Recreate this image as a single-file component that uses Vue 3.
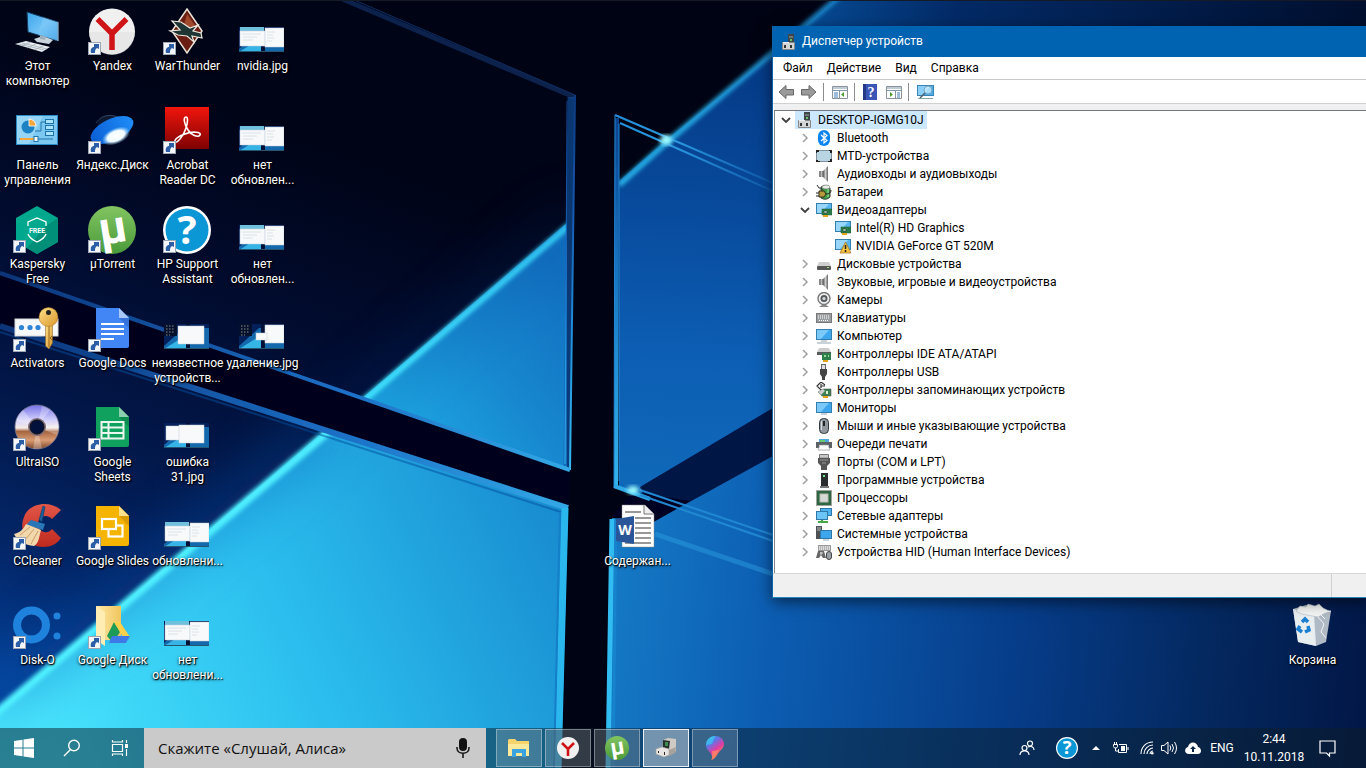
<script setup>
const shots = {
  split: { dots: false, panes: [[1, 4, 25, 15], [26, 1, 19, 19]], lines: true },
  single: { dots: true, panes: [[14, 2, 26, 18]], lines: false },
  dialog: { dots: true, panes: [[26, 1, 19, 18], [17, 9, 11, 7]], lines: false },
  error: { dots: false, panes: [[2, 3, 14, 14], [15, 2, 25, 18]], lines: false }
}

const marks = {
  kasper: { t: 'FREE', x: 24, y: 27, cls: 'free' },
  utor: { t: 'µ', x: 25, y: 37, cls: 'mu' },
  hp: { t: '?', x: 24, y: 38, cls: 'q' },
  word: { t: 'W', x: 12, y: 32, cls: 'w' }
}

const items = [
  { c: 1, r: 1, icon: 'pc', text: 'Этот\nкомпьютер' },
  { c: 1, r: 2, icon: 'panel', text: 'Панель\nуправления' },
  { c: 1, r: 3, icon: 'kasper', link: true, text: 'Kaspersky\nFree' },
  { c: 1, r: 4, icon: 'activ', link: true, text: 'Activators' },
  { c: 1, r: 5, icon: 'iso', link: true, text: 'UltraISO' },
  { c: 1, r: 6, icon: 'cclean', link: true, text: 'CCleaner' },
  { c: 1, r: 7, icon: 'disko', link: true, text: 'Disk-O' },
  { c: 2, r: 1, icon: 'yandex', link: true, text: 'Yandex' },
  { c: 2, r: 2, icon: 'ydisk', link: true, text: 'Яндекс.Диск' },
  { c: 2, r: 3, icon: 'utor', link: true, text: 'µTorrent' },
  { c: 2, r: 4, icon: 'docs', link: true, text: 'Google Docs' },
  { c: 2, r: 5, icon: 'sheets', link: true, text: 'Google\nSheets' },
  { c: 2, r: 6, icon: 'slides', link: true, text: 'Google Slides' },
  { c: 2, r: 7, icon: 'gdrive', link: true, text: 'Google Диск' },
  { c: 3, r: 1, icon: 'war', link: true, text: 'WarThunder' },
  { c: 3, r: 2, icon: 'acro', link: true, text: 'Acrobat\nReader DC' },
  { c: 3, r: 3, icon: 'hp', link: true, text: 'HP Support\nAssistant' },
  { c: 3, r: 4, shot: 'single', text: 'неизвестное\nустройств...' },
  { c: 3, r: 5, shot: 'error', text: 'ошибка\n31.jpg' },
  { c: 3, r: 6, shot: 'split', text: 'обновлени...' },
  { c: 3, r: 7, shot: 'split', text: 'нет\nобновлени...' },
  { c: 4, r: 1, shot: 'split', text: 'nvidia.jpg' },
  { c: 4, r: 2, shot: 'split', text: 'нет\nобновлен...' },
  { c: 4, r: 3, shot: 'split', text: 'нет\nобновлен...' },
  { c: 4, r: 4, shot: 'dialog', text: 'удаление.jpg' },
  { c: 9, r: 6, icon: 'word', text: 'Содержан...' },
  { c: 18, r: 7, icon: 'bin', text: 'Корзина' }
]

const tree = [
  { l: 0, open: true, icon: 'root', text: 'DESKTOP-IGMG10J', sel: true },
  { l: 1, icon: 'bt', text: 'Bluetooth' },
  { l: 1, icon: 'mtd', text: 'MTD-устройства' },
  { l: 1, icon: 'snd', text: 'Аудиовходы и аудиовыходы' },
  { l: 1, icon: 'bat', text: 'Батареи' },
  { l: 1, open: true, icon: 'gpu', text: 'Видеоадаптеры' },
  { l: 2, leaf: true, icon: 'gpu', text: 'Intel(R) HD Graphics' },
  { l: 2, leaf: true, icon: 'gpuwarn', text: 'NVIDIA GeForce GT 520M' },
  { l: 1, icon: 'disk', text: 'Дисковые устройства' },
  { l: 1, icon: 'snd', text: 'Звуковые, игровые и видеоустройства' },
  { l: 1, icon: 'cam', text: 'Камеры' },
  { l: 1, icon: 'kbd', text: 'Клавиатуры' },
  { l: 1, icon: 'comp', text: 'Компьютер' },
  { l: 1, icon: 'ide', text: 'Контроллеры IDE ATA/ATAPI' },
  { l: 1, icon: 'usb', text: 'Контроллеры USB' },
  { l: 1, icon: 'stor', text: 'Контроллеры запоминающих устройств' },
  { l: 1, icon: 'mon', text: 'Мониторы' },
  { l: 1, icon: 'mouse', text: 'Мыши и иные указывающие устройства' },
  { l: 1, icon: 'print', text: 'Очереди печати' },
  { l: 1, icon: 'port', text: 'Порты (COM и LPT)' },
  { l: 1, icon: 'soft', text: 'Программные устройства' },
  { l: 1, icon: 'cpu', text: 'Процессоры' },
  { l: 1, icon: 'net', text: 'Сетевые адаптеры' },
  { l: 1, icon: 'sys', text: 'Системные устройства' },
  { l: 1, icon: 'hid', text: 'Устройства HID (Human Interface Devices)' }
]

const menu = ['Файл', 'Действие', 'Вид', 'Справка']
const apps = [
  { icon: 'explorer', name: 'Проводник' },
  { icon: 'tyandex', name: 'Yandex' },
  { icon: 'utor', name: 'µTorrent', big: true },
  { icon: 'tdev', name: 'Диспетчер устройств', on: true },
  { icon: 'paint', name: 'Paint 3D' }
]
</script>

<template>
  <main class="screen">
    <svg class="wall" viewBox="0 0 1366 768" preserveAspectRatio="none" aria-hidden="true">
      <defs>
        <linearGradient id="wBase" gradientUnits="userSpaceOnUse" x1="250" y1="120" x2="40" y2="700">
          <stop offset="0" stop-color="#000417" /><stop offset="0.3" stop-color="#010c30" /><stop offset="0.55" stop-color="#021749" /><stop offset="0.8" stop-color="#03276a" /><stop offset="1" stop-color="#05439a" />
        </linearGradient>
        <linearGradient id="wTri" gradientUnits="userSpaceOnUse" x1="400" y1="420" x2="575" y2="290">
          <stop offset="0" stop-color="#1da4e0" /><stop offset="0.5" stop-color="#1787cf" /><stop offset="1" stop-color="#1270c0" />
        </linearGradient>
        <linearGradient id="wLow" gradientUnits="userSpaceOnUse" x1="60" y1="768" x2="600" y2="520">
          <stop offset="0" stop-color="#48e3fc" /><stop offset="0.45" stop-color="#2bbeee" /><stop offset="1" stop-color="#1686cc" />
        </linearGradient>
        <linearGradient id="wR" gradientUnits="userSpaceOnUse" x1="700" y1="60" x2="680" y2="480">
          <stop offset="0" stop-color="#053a86" /><stop offset="0.35" stop-color="#084a9c" /><stop offset="0.7" stop-color="#0c5eb4" /><stop offset="1" stop-color="#1068b8" />
        </linearGradient>
        <linearGradient id="wRlow" gradientUnits="userSpaceOnUse" x1="610" y1="560" x2="1366" y2="640">
          <stop offset="0" stop-color="#157ac6" /><stop offset="0.22" stop-color="#0c5db2" /><stop offset="0.55" stop-color="#063c88" /><stop offset="0.8" stop-color="#04285f" /><stop offset="1" stop-color="#021848" />
        </linearGradient>
        <linearGradient id="wTop" gradientUnits="userSpaceOnUse" x1="780" y1="0" x2="1366" y2="0">
          <stop offset="0" stop-color="#07509c" /><stop offset="0.3" stop-color="#032a66" /><stop offset="1" stop-color="#010f2e" />
        </linearGradient>
        <linearGradient id="wRay" gradientUnits="userSpaceOnUse" x1="365" y1="395" x2="835" y2="0">
          <stop offset="0" stop-color="#43e8ff" /><stop offset="0.6" stop-color="#2bbdf0" /><stop offset="1" stop-color="#1a86cc" />
        </linearGradient>
        <linearGradient id="wEdge" gradientUnits="userSpaceOnUse" x1="0" y1="95" x2="0" y2="470">
          <stop offset="0" stop-color="#0d3a80" /><stop offset="0.3" stop-color="#1557ae" /><stop offset="0.6" stop-color="#1f8bd8" /><stop offset="1" stop-color="#35b9f0" />
        </linearGradient>
        <linearGradient id="wInner" gradientUnits="userSpaceOnUse" x1="0" y1="118" x2="0" y2="482">
          <stop offset="0" stop-color="#0b428c" /><stop offset="0.4" stop-color="#1672c0" /><stop offset="1" stop-color="#32b4ec" />
        </linearGradient>
        <linearGradient id="wDiag" gradientUnits="userSpaceOnUse" x1="0" y1="0" x2="570" y2="0">
          <stop offset="0" stop-color="#0a3478" /><stop offset="0.6" stop-color="#1c6fc6" /><stop offset="1" stop-color="#33a9e6" />
        </linearGradient>
        <linearGradient id="wFade" gradientUnits="userSpaceOnUse" x1="614" y1="0" x2="773" y2="0">
          <stop offset="0" stop-color="#2390dc" /><stop offset="0.4" stop-color="#2a96de" /><stop offset="1" stop-color="#0e55a6" />
        </linearGradient>
        <filter id="b2" x="-20%" y="-20%" width="140%" height="140%"><feGaussianBlur stdDeviation="2" /></filter>
        <filter id="b1" x="-20%" y="-20%" width="140%" height="140%"><feGaussianBlur stdDeviation="0.7" /></filter>
        <filter id="b20" x="-50%" y="-50%" width="200%" height="200%"><feGaussianBlur stdDeviation="26" /></filter>
        <clipPath id="cUp"><path d="M0 0H340L567 100 567 470 0 273z" /></clipPath>
        <clipPath id="cLow"><path d="M0 325L568 507 561 768H0z" /></clipPath>
      </defs>
      <rect width="1366" height="768" fill="url(#wBase)" />
      <path d="M340 0L575 96 570 470 568 507 561 768H1366V0z" fill="#000313" />
      <g clip-path="url(#cUp)">
        <path d="M360 400L575 216V480z" fill="url(#wTri)" />
        <path d="M350 408L580 212" stroke="#083c92" stroke-width="30" filter="url(#b20)" opacity="0.25" />
        <path d="M350 412L580 216" stroke="url(#wRay)" stroke-width="6" filter="url(#b2)" />
      </g>
      <path d="M0 273L570 470 568 507 0 324z" fill="#00041a" filter="url(#b1)" />
      <g clip-path="url(#cLow)">
        <path d="M0 709L330 426 580 500V768H0z" fill="url(#wLow)" />
        <path d="M-10 700L330 420" stroke="#0a54b4" stroke-width="30" filter="url(#b20)" opacity="0.5" />
        <path d="M-10 718L330 430" stroke="#4ff0ff" stroke-width="8" filter="url(#b2)" />
      </g>
      <path d="M835 0H1366V300H773V53z" fill="url(#wTop)" />
      <path d="M773 53L665 141 619 181V487L773 542z" fill="url(#wR)" />
      <path d="M773 408L640 487 655 523 773 540z" fill="#011344" filter="url(#b1)" />
      <path d="M773 456L655 521 612 518 607 768H1366V456z" fill="url(#wRlow)" />
      <path d="M612 516L633 492 690 501 650 524z" fill="#000620" filter="url(#b1)" />
      <path d="M619 185L665 144 842 -6" fill="none" stroke="url(#wRay)" stroke-width="5" filter="url(#b2)" />
      <g fill="none" filter="url(#b1)">
        <path d="M340 -2L574 97" stroke="#08204c" stroke-width="5" />
        <path d="M345 -4L575 95" stroke="#0e2f63" stroke-width="1" />
        <path d="M571 97L567 467" stroke="#0f59ad" stroke-opacity="0.6" stroke-width="7" />
        <path d="M575 95L570 470" stroke="url(#wEdge)" stroke-width="2" />
        <path d="M567 101L565 464" stroke="url(#wEdge)" stroke-width="1" />
        <path d="M0 273L570 470" stroke="url(#wDiag)" stroke-width="4" />
        <path d="M0 332L567 514" stroke="#0b4d9d" stroke-width="2" opacity="0.5" />
        <path d="M0 326L568 508" stroke="url(#wDiag)" stroke-width="6" />
        <path d="M565 508L558 768" stroke="#2bb7ee" stroke-width="7" />
        <path d="M560 512L554 768" stroke="#137fc8" stroke-width="2" />
        <path d="M773 183L615 115" stroke="url(#wFade)" stroke-width="2" />
        <path d="M773 191L620 123" stroke="url(#wFade)" stroke-width="2" />
        <path d="M617 118L616 486" stroke="url(#wInner)" stroke-width="4" />
        <path d="M615 115L614 487M619 124L619 481" stroke="#2386d4" stroke-width="1" />
        <path d="M614 486L650 499" stroke="#2ea9e6" stroke-width="4" />
        <path d="M640 495L773 541M640 490L773 535" stroke="#2088d2" stroke-width="2" />
        <path d="M612 519L608 768" stroke="#30bdf2" stroke-width="5" />
        <path d="M616 520L613 768" stroke="#1683cc" stroke-width="3" />
        <path d="M655 534L773 574" stroke="#2c9be0" stroke-width="5" stroke-opacity="0.5" />
      </g>
      <ellipse cx="666" cy="140" rx="6" ry="5" fill="#9dfcff" filter="url(#b2)" />
      <ellipse cx="633" cy="490" rx="6" ry="4" fill="#9dfcff" filter="url(#b2)" />
      <rect width="1366" height="1" fill="#141a26" />
    </svg>

    <svg class="defs" aria-hidden="true">
      <defs>
        <linearGradient id="gScr" x1="0" y1="0" x2="1" y2="1"><stop offset="0" stop-color="#3ba4ea" /><stop offset="0.5" stop-color="#6fc2f6" /><stop offset="1" stop-color="#2f97e2" /></linearGradient>
        <linearGradient id="gRed" x1="0" y1="0" x2="0" y2="1"><stop offset="0" stop-color="#f2150d" /><stop offset="1" stop-color="#7d0202" /></linearGradient>
        <linearGradient id="gKey" x1="0" y1="0" x2="1" y2="1"><stop offset="0" stop-color="#ffe18b" /><stop offset="1" stop-color="#d9952a" /></linearGradient>
        <linearGradient id="gIso" x1="0" y1="0" x2="0" y2="1"><stop offset="0" stop-color="#7672e8" /><stop offset="0.35" stop-color="#d4d2fb" /><stop offset="0.52" stop-color="#f5ece6" /><stop offset="0.6" stop-color="#a4653f" /><stop offset="0.8" stop-color="#d99b74" /><stop offset="1" stop-color="#7b4426" /></linearGradient>
        <linearGradient id="gUt" x1="0" y1="0" x2="0" y2="1"><stop offset="0" stop-color="#82c461" /><stop offset="1" stop-color="#4a9a3a" /></linearGradient>
        <linearGradient id="gYd" x1="0" y1="0" x2="1" y2="0"><stop offset="0" stop-color="#0b5fd6" /><stop offset="1" stop-color="#1e8cf6" /></linearGradient>
        <radialGradient id="gGlow"><stop offset="0" stop-color="#fff" /><stop offset="0.6" stop-color="#f0fbff" /><stop offset="1" stop-color="#8fd2ff" stop-opacity="0" /></radialGradient>
        <linearGradient id="gPaint" x1="0" y1="0" x2="0.6" y2="1"><stop offset="0" stop-color="#2bc3f2" /><stop offset="0.35" stop-color="#5f76e8" /><stop offset="0.65" stop-color="#e33ba2" /><stop offset="1" stop-color="#ff9a2e" /></linearGradient>
        <linearGradient id="gSilver" x1="0" y1="0" x2="1" y2="0"><stop offset="0" stop-color="#555" /><stop offset="0.5" stop-color="#ccc" /><stop offset="1" stop-color="#666" /></linearGradient>
        <linearGradient id="gFold" x1="0" y1="0" x2="1" y2="0"><stop offset="0" stop-color="#ffe9a8" /><stop offset="1" stop-color="#f0c55c" /></linearGradient>
        <linearGradient id="gC" x1="0" y1="0" x2="0" y2="1"><stop offset="0" stop-color="#e25648" /><stop offset="1" stop-color="#bf2a1f" /></linearGradient>
      </defs>
      <symbol id="pc" viewBox="0 0 48 48">
        <path d="M14 4L45 14V33L15 24z" fill="url(#gScr)" stroke="#123c60" /><path d="M30 9L45 14V33L25 27z" fill="#8fd2fa" opacity="0.35" /><path d="M45 14V33" stroke="#a9c4d6" />
        <path d="M21 31L30 28 40 32 36 36 24 34z" fill="#c9d4dc" /><path d="M27 27L33 29 32 32 27 31z" fill="#9fb0bd" />
        <path d="M2 36L13 33 37 39 29 44z" fill="#e8edf0" /><path d="M5 36L31 42M9 35L34 41M8 38L18 34M14 40L23 36M21 42L30 38" stroke="#9aa8b4" stroke-width="0.7" />
      </symbol>
      <symbol id="panel" viewBox="0 0 48 48">
        <rect x="3.500" y="8.500" width="41" height="29" fill="#7cc8f0" stroke="#2a8cc7" /><path d="M4 9H30L16 37H4z" fill="#a9def8" opacity="0.6" />
        <circle cx="15" cy="20" r="6.500" fill="#1b82c4" /><path d="M16 19V12A7 7 0 0 1 23 19z" fill="#f6a73c" stroke="#fff" stroke-width="0.8" /><path d="M22 24H28V15H32M6 32H40" fill="none" stroke="#2277ac" /><rect x="32.500" y="12.500" width="8" height="4" fill="#a9e2fb" stroke="#1d73a7" /><rect x="32.500" y="18.500" width="8" height="4" fill="#a9e2fb" stroke="#1d73a7" /><rect x="32.500" y="24.500" width="8" height="4" fill="#a9e2fb" stroke="#1d73a7" />
        <path d="M7 32H21" stroke="#f7a63a" stroke-width="2" /><rect x="21" y="29.500" width="4" height="5" fill="#fff" stroke="#1d73a7" />
      </symbol>
      <symbol id="kasper" viewBox="0 0 48 48">
        <path d="M24 0L45 12V36L24 48 3 36V12z" fill="#00a88e" /><path d="M45 12V36L24 48 14 42 33 20z" fill="#008f78" />
        <path d="M15 20V16L24 12 33 16V20M15 28C16 32 20 34 24 36 28 34 32 32 33 28" fill="none" stroke="#fff" stroke-width="1.300" />
      </symbol>
      <symbol id="activ" viewBox="0 0 48 48">
        <rect x="2" y="14" width="43" height="17" fill="#f7f8fa" stroke="#d6dade" /><g fill="#2f86d6"><circle cx="8.500" cy="22.500" r="2.600" /><circle cx="17" cy="22.500" r="2.600" /><circle cx="25" cy="22.500" r="2.600" /></g>
        <path d="M32.500 19H39.500V38L36 44 32.500 41z" fill="url(#gKey)" stroke="#7d5a1d" stroke-width="0.5" /><path d="M36 20V42M39 31L37 33 39 35" stroke="#96681e" fill="none" /><circle cx="35.500" cy="12" r="9.500" fill="url(#gKey)" stroke="#a5741f" stroke-width="0.5" /><circle cx="35.500" cy="7.500" r="2.500" fill="#222" />
      </symbol>
      <symbol id="iso" viewBox="0 0 48 48">
        <circle cx="24" cy="23" r="22" fill="url(#gIso)" stroke="#7a7890" stroke-width="0.8" /><path d="M24 23L10 6A22 22 0 0 0 3 17zM24 23L46 20A22 22 0 0 1 44 31zM24 23L20 45A22 22 0 0 0 29 44zM24 23L29 2A22 22 0 0 1 37 6z" fill="#fff" opacity="0.28" /><circle cx="24" cy="23" r="9" fill="#7b6a78" /><circle cx="24" cy="23" r="7" fill="#02103c" stroke="#111" />
      </symbol>
      <symbol id="cclean" viewBox="0 0 48 48">
        <path d="M48 7C35-4 15 1 11 14 5 28 15 44 30 44 38 44 44 41 48 35L39 26C34 32 25 29 25 21 25 14 33 10 39 16z" fill="url(#gC)" />
        <path d="M26 17L30 3 32 4 29 19z" fill="#1c5e98" stroke="#0c3b68" stroke-width="0.6" /><path d="M18 17L32 21 30 27 13 22z" fill="#2977b7" /><path d="M13 21L28 27C26 34 26 40 21 43 12 42 5 39 1 31 6 30 10 27 13 21z" fill="#f2d7ac" /><path d="M7 32L17 24M12 37L21 26M18 41L25 28" stroke="#c99f66" fill="none" />
      </symbol>
      <symbol id="disko" viewBox="0 0 48 48">
        <circle cx="18.500" cy="23" r="14.500" fill="none" stroke="#1f82dc" stroke-width="8" /><circle cx="44" cy="14" r="3.500" fill="#1f82dc" /><circle cx="44" cy="34" r="3.500" fill="#1f82dc" />
      </symbol>
      <symbol id="yandex" viewBox="0 0 48 48">
        <circle cx="24" cy="23.500" r="23" fill="#f0f0f1" /><path d="M1 24A23 23 0 0 0 47 24z" fill="#dedee0" opacity="0.5" /><path d="M9.500 11L24 25.500 38.500 11M24 24V42" fill="none" stroke="#cf1317" stroke-width="5.500" />
      </symbol>
      <symbol id="ydisk" viewBox="0 0 48 48">
        <path d="M9 19C13 3 27 7 37 13L31 22z" fill="#121d33" opacity="0.8" /><path d="M8 16C15 6 26 7 36 13" fill="none" stroke="#3a5070" stroke-width="0.8" /><ellipse cx="24" cy="23" rx="23" ry="11" fill="url(#gYd)" transform="rotate(-25 24 23)" /><ellipse cx="28" cy="29" rx="15" ry="8" fill="url(#gGlow)" transform="rotate(-23 28 29)" />
      </symbol>
      <symbol id="utor" viewBox="0 0 48 48"><circle cx="24" cy="24" r="24" fill="url(#gUt)" /></symbol>
      <symbol id="docs" viewBox="0 0 48 48">
        <path d="M8 3H31L41 13V41Q41 43 39 43H10Q8 43 8 41z" fill="#4285f4" /><path d="M31 13H41V23z" fill="#2f66c8" opacity="0.6" /><path d="M31 3L41 13H31z" fill="#a8c7fa" /><path d="M13 19H36M13 24H36M13 29H36M13 34H26" stroke="#fff" stroke-width="2.200" />
      </symbol>
      <symbol id="sheets" viewBox="0 0 48 48">
        <path d="M8 3H31L41 13V41Q41 43 39 43H10Q8 43 8 41z" fill="#10a15e" /><path d="M31 13H41V23z" fill="#0b7b46" opacity="0.6" /><path d="M31 3L41 13H31z" fill="#8bd0ae" /><path d="M13.500 18H35.500V34.500H13.500zM13 23.500H35M13 29H35M20.500 18V34" fill="none" stroke="#e9f7ef" stroke-width="2" />
      </symbol>
      <symbol id="slides" viewBox="0 0 48 48">
        <path d="M8 3H31L41 13V41Q41 43 39 43H10Q8 43 8 41z" fill="#f4b400" /><path d="M31 13H41V23z" fill="#c88b00" opacity="0.6" /><path d="M31 3L41 13H31z" fill="#fde08a" /><rect x="20.500" y="22.500" width="14" height="11" fill="#f4b400" stroke="#fff" stroke-width="2.200" /><rect x="14" y="16" width="14" height="10" fill="#f4b400" stroke="#fff" stroke-width="2.200" />
      </symbol>
      <symbol id="gdrive" viewBox="0 0 48 48">
        <path d="M8 4H33V38H16z" fill="url(#gFold)" /><path d="M8 4L17 10V44L8 38z" fill="#ffedb3" /><path d="M26 20L32 30 25 41 19 34z" fill="#1e9b57" /><path d="M26 20H32L42 35H35z" fill="#ffd04b" /><path d="M24 34H42L38 41H21z" fill="#3f79e8" />
      </symbol>
      <symbol id="war" viewBox="0 0 48 48">
        <path d="M24 1L39 23 24 45 9 23z" fill="#6a1d12" stroke="#e9e3d6" stroke-width="1.500" /><path d="M24 6L33 19 20 20z" fill="#a1492c" /><path d="M9 13L18 14 27 20 35 17 30 23 38 25 39 30 29 28 31 34 24 28 15 27 7 23 17 22z" fill="#1f3533" stroke="#efe9df" stroke-width="1.200" />
      </symbol>
      <symbol id="acro" viewBox="0 0 48 48">
        <rect x="2" width="44" height="42" fill="url(#gRed)" /><path d="M23 10C20 10 21 17 25 23 28 28 35 31 37 28 39 25 29 24 22 27 15 29 11 33 12 35 14 37 21 28 23 21 25 15 25 10 23 10z" fill="none" stroke="#fff" stroke-width="1.600" />
      </symbol>
      <symbol id="hp" viewBox="0 0 48 48"><circle cx="24" cy="24" r="24" fill="#fff" /><circle cx="24" cy="24" r="21.500" fill="#0b96d5" /></symbol>
      <symbol id="word" viewBox="0 0 48 48">
        <path d="M9 2H32L41 11V44H9z" fill="#fff" stroke="#888" stroke-width="0.5" /><path d="M31 2V11H41" fill="#eee" stroke="#777" /><path d="M12 9H28M22 15H38M22 20H38M22 25H38M22 30H38M22 35H38M12 40H38" stroke="#777" stroke-width="1.600" /><path d="M3 16L21 13V41L3 38z" fill="#2a5699" />
      </symbol>
      <symbol id="bin" viewBox="0 0 48 48">
        <path d="M5 7L18 3 43 9 38 40 28 44 10 40z" fill="#c3ccd3" opacity="0.9" /><path d="M5 7L26 12 28 44 10 40z" fill="#e9eef0" /><path d="M8 9L12 4 18 5 20 2 27 4 31 2 35 6 41 9 30 15 14 12z" fill="#f5f6f6" stroke="#b4bcc3" stroke-width="0.6" /><path d="M26 12L43 9M30 15L36 22 33 30 38 36M32 12L37 17" fill="none" stroke="#f4f5f6" />
        <g fill="none" stroke="#1b80d2" stroke-width="3.500"><path d="M14 20L17 17 20 20" /><path d="M20 24L21 28 17 30" /><path d="M14 30L10 27 12 24" /></g>
      </symbol>

      <symbol id="root" viewBox="0 0 16 16"><path d="M7 0H13V10H7z" fill="#3f4548" /><path d="M8 2H12V4H8z" fill="#6c7777" /><rect x="9" y="5" width="2" height="2" fill="#6cc36c" /><path d="M1.500 8.500H13.500V15.500H1.500z" fill="#d3d5d6" stroke="#888" /><path d="M3 11H5V14H3zM9 11H11V14H9z" fill="#333" /><path d="M2 8.500H8" stroke="#eee" /></symbol>
      <symbol id="bt" viewBox="0 0 16 16"><rect x="2" width="12" height="16" rx="6" fill="#0a84f0" /><path d="M5 5L11 10.500 8 13V3L11 5.500 5 11" fill="none" stroke="#fff" stroke-width="1.200" /></symbol>
      <symbol id="mtd" viewBox="0 0 16 16"><rect x="0.500" y="2.500" width="15" height="11" fill="#b9d5e4" stroke="#7d8f99" /><path d="M0 2H3V4H1V5H0zM13 2H16V5H14V3H13zM0 12H2V13H4V14H0zM14 11H16V14H12V13H14z" fill="#222" /></symbol>
      <symbol id="snd" viewBox="0 0 16 16"><path d="M3 5H7V11H3z" fill="#888" /><path d="M7 5L12 0V16L7 11z" fill="url(#gSilver)" /><path d="M5.500 5V11" stroke="#bbb" /></symbol>
      <symbol id="bat" viewBox="0 0 16 16"><path d="M5 3Q9 0 14 4V13Q10 17 5 14z" fill="#3f9d45" stroke="#38433a" /><ellipse cx="10" cy="3" rx="4" ry="2" fill="#e9efe8" stroke="#666" stroke-width="0.6" /><path d="M12 5V13" stroke="#a5eba6" /><path d="M1 1L3 4Q7 4 6 7" fill="none" stroke="#333" /><path d="M0 9H4M0 12H4" stroke="#222" /><path d="M3 7H8L10 10 8 13H3z" fill="#b89a3a" stroke="#33301c" /><path d="M10 10Q15 10 15 6" fill="none" stroke="#222" /></symbol>
      <symbol id="gpu" viewBox="0 0 16 16"><rect x="0.500" y="1.500" width="15" height="10" fill="#58b5f0" stroke="#347fae" /><path d="M1 2H13L5 11H1z" fill="#98d7fb" /><rect x="6" y="7" width="10" height="6" fill="#2c7f49" stroke="#155530" stroke-width="0.5" /><path d="M8 9H11V11H8zM13 9H14" fill="#bde5c0" stroke="#102" stroke-width="0.4" /><path d="M7 14H12" stroke="#e4a11d" stroke-width="2" /></symbol>
      <symbol id="gpuwarn" viewBox="0 0 16 16"><rect x="0.500" y="1.500" width="15" height="10" fill="#58b5f0" stroke="#347fae" /><path d="M1 2H13L5 11H1z" fill="#98d7fb" /><path d="M10.500 4L16 15H5z" fill="#f8c440" stroke="#a26c14" stroke-width="0.7" /><path d="M10.500 7V11M10.500 12V14" stroke="#222" stroke-width="1.500" /></symbol>
      <symbol id="disk" viewBox="0 0 16 16"><path d="M3 6H13L15 10H1z" fill="#cfcfcf" /><rect x="1" y="10" width="14" height="4" rx="1" fill="#555" /><rect x="11" y="11" width="2" height="1" fill="#9ade7b" /></symbol>
      <symbol id="cam" viewBox="0 0 16 16"><circle cx="8" cy="6.500" r="6" fill="#eee" stroke="#777" stroke-width="1.400" /><circle cx="8" cy="6.500" r="3.500" fill="#565a5d" /><circle cx="8" cy="6.500" r="1.600" fill="#ddd" /><path d="M6 13H10L13 15H3z" fill="#888" /></symbol>
      <symbol id="kbd" viewBox="0 0 16 16"><rect x="0.500" y="3.500" width="15" height="9" fill="#9a9ea0" stroke="#777" /><path d="M2 6H14M2 8H14M3 10.500H13" stroke="#fff" stroke-width="1" stroke-dasharray="1 1" /></symbol>
      <symbol id="comp" viewBox="0 0 16 16"><rect x="0.500" y="1.500" width="15" height="10" fill="#3ea6ec" stroke="#347fae" /><path d="M1 2H13L5 11H1z" fill="#7ac9f8" /><path d="M5 13H11M1 15H15" stroke="#91a6b3" /></symbol>
      <symbol id="ide" viewBox="0 0 16 16"><path d="M3 2H13L15 6H1z" fill="#ccc" /><rect x="1" y="6" width="14" height="3" fill="#565a5b" /><rect x="6" y="7" width="9" height="7" fill="#2c7f49" /><path d="M8 9H10V11H8zM12 9H13V11H12z" fill="#9fd6a6" /><path d="M7 15H12" stroke="#e4a11d" stroke-width="2" /></symbol>
      <symbol id="usb" viewBox="0 0 16 16"><rect x="5.500" y="0.500" width="4" height="5" fill="#ddd" stroke="#666" /><path d="M4 5H11V10L9 13V16H6V13L4 10z" fill="#444" /></symbol>
      <symbol id="stor" viewBox="0 0 16 16"><path d="M9 3L5 0 1 4 5 8H8M5 2V6M5 4H9" fill="none" stroke="#333" stroke-width="1.200" /><path d="M2 10L7 7H15V14H6z" fill="#3c7f50" stroke="#555" stroke-width="0.6" /><path d="M2 10L7 7 9 9 5 13z" fill="#ccc" /><path d="M10 9H12V12H10z" fill="#d8ebd9" /><path d="M7 15H12" stroke="#e4a11d" stroke-width="2" /></symbol>
      <symbol id="mon" viewBox="0 0 16 16"><rect x="0.500" y="2.500" width="15" height="10" fill="#3ea6ec" stroke="#347fae" /><path d="M1 3H13L5 12H1z" fill="#7ac9f8" /><path d="M5 14H11" stroke="#91a6b3" /></symbol>
      <symbol id="mouse" viewBox="0 0 16 16"><rect x="3.500" y="0.500" width="9" height="15" rx="4" fill="#8f989f" stroke="#34393d" /><rect x="7" y="3" width="2" height="5" fill="#222" /><path d="M5.500 3V12" stroke="#d7dcdf" /></symbol>
      <symbol id="print" viewBox="0 0 16 16"><path d="M3 3H13V6H3z" fill="#4ca7dc" /><path d="M0 6H16V12H13V9H3V12H0z" fill="#5b6164" /><path d="M4 9H12L14 14H2z" fill="#fff" stroke="#999" stroke-width="0.7" /><path d="M4 5H9" stroke="#67c970" stroke-width="2" /></symbol>
      <symbol id="port" viewBox="0 0 16 16"><path d="M3.500 0.500H12.500V4H3.500z" fill="#ddd" stroke="#777" /><path d="M2 4H14V9L11 12V16H5V12L2 9z" fill="#555" /><path d="M5 1V4M7 1V4M9 1V4M11 1V4M4 6H12M6 9H10" stroke="#aaa" stroke-width="0.8" /></symbol>
      <symbol id="soft" viewBox="0 0 16 16"><path d="M5 1H12V14H5z" fill="#292d2f" /><path d="M4 14H13V16H4z" fill="#777" /><path d="M8 3V5" stroke="#72e68d" stroke-width="2" /></symbol>
      <symbol id="cpu" viewBox="0 0 16 16"><rect x="0.500" y="0.500" width="15" height="15" fill="none" stroke="#3b4b35" stroke-dasharray="1 1" /><rect x="1" y="1" width="14" height="14" fill="#2f6542" /><rect x="4" y="4" width="8" height="8" fill="#d5d9d4" stroke="#b7bdb4" /></symbol>
      <symbol id="net" viewBox="0 0 16 16"><rect x="4.500" y="0.500" width="11" height="7" fill="#4cb2ef" stroke="#2d78a8" /><rect x="0.500" y="3.500" width="11" height="8" fill="#6bc6f7" stroke="#2d78a8" /><path d="M6 12V14M2 14H12" stroke="#44a844" stroke-width="2" /></symbol>
      <symbol id="sys" viewBox="0 0 16 16"><rect x="0" y="0" width="6" height="13" fill="#4d5254" /><path d="M1 2H5M1 4H5" stroke="#bbb" /><rect x="4.500" y="4.500" width="11" height="8" fill="#3ea6ec" stroke="#2d78a8" /><path d="M7 14H13" stroke="#9ab" /></symbol>
      <symbol id="hid" viewBox="0 0 16 16"><rect x="2.500" y="1.500" width="12" height="5" fill="#ddd" stroke="#999" /><path d="M4 3H13M4 5H13" stroke="#888" stroke-dasharray="1 1" /><path d="M0 14L2 7H8L10 14H7L5 11 3 14z" fill="#666" /><path d="M5 8V11M4 9H7" stroke="#ddd" /><rect x="10.500" y="7.500" width="5" height="8" rx="2.500" fill="#9aa1a6" stroke="#444" /></symbol>

      <symbol id="explorer" viewBox="0 0 24 24"><path d="M1 4L2 3H8L10 5H22V20H1z" fill="#f6d46b" /><path d="M1 8H22V20H1z" fill="#fde99b" /><path d="M5 13H19V21H15V17H9V21H5z" fill="#3ba3dd" /></symbol>
      <symbol id="tyandex" viewBox="0 0 24 24"><circle cx="12" cy="12" r="11" fill="#f0f0f0" /><path d="M6 7L12 13 18 7M12 12V20" fill="none" stroke="#cf1317" stroke-width="2.600" /></symbol>
      <symbol id="tdev" viewBox="0 0 24 24"><path d="M9 4L14 2 22 3 22 15 14 19z" fill="#cfcac4" /><path d="M9 4L16 5 15 13 9 12z" fill="#26312a" /><path d="M11 6H14V10H11z" fill="#3d8a52" /><path d="M2 13L8 11 15 13V19L10 21 2 18z" fill="#e7e4e1" stroke="#a8a4a0" stroke-width="0.6" /><path d="M4 15H5V17H4zM10 16H11V19H10z" fill="#2b2b2b" /><path d="M15 14L22 11 21 17 15 20z" fill="#a8a29c" /></symbol>
      <symbol id="paint" viewBox="0 0 24 24"><path d="M12 0C7 0 3 4 3 9 3 14 8 16 9 20 9 22 9 23 8 24 13 23 14 18 17 15 19 13 21 11 21 8 21 3 17 0 12 0z" fill="url(#gPaint)" /><path d="M12 0C7 0 3 4 3 9L9 8z" fill="#33d3ee" opacity="0.6" /><path d="M9 15L16 14C14 17 13 20 9 24 10 21 9 18 9 15z" fill="#ff8c62" opacity="0.7" /></symbol>
    </svg>

    <section class="desktop" aria-label="Рабочий стол">
      <button v-for="it in items" :key="it.c + '-' + it.r" class="tile" :style="{ gridColumn: it.c, gridRow: it.r }">
        <span class="pic">
          <svg v-if="it.icon" width="48" height="48" viewBox="0 0 48 48">
            <use :href="'#' + it.icon" width="48" height="48" />
            <text v-if="marks[it.icon]" :x="marks[it.icon].x" :y="marks[it.icon].y" :class="marks[it.icon].cls" text-anchor="middle">{{ marks[it.icon].t }}</text>
          </svg>
          <svg v-else class="shot" width="45" height="25" viewBox="0 0 45 25">
            <rect width="45" height="25" fill="#04205a" />
            <path d="M0 22L20 4H45V25H0z" fill="#1468ac" /><path d="M0 25L24 10V25z" fill="#36b4e6" /><path d="M22 0H26V25H22z" fill="#021036" />
            <path v-if="shots[it.shot].lines" d="M1 0H25V4H1z" fill="#6fc0dd" />
            <g v-if="shots[it.shot].dots"><rect width="13" height="12" fill="#04102c" /><path d="M2 2H10M2 5H10M2 8H10M2 11H6" stroke="#8d8a88" stroke-dasharray="1.500 1.500" /></g>
            <rect v-for="(p, i) in shots[it.shot].panes" :key="i" :x="p[0]" :y="p[1]" :width="p[2]" :height="p[3]" fill="#f7f9fb" stroke="#c2d0da" stroke-width="0.5" />
            <path v-if="shots[it.shot].lines" d="M3 7H22M4 10H18M4 13H14M28 5H36M28 8H34M28 11H35M28 14H33" stroke="#dbe2e7" />
            <path d="M0 24.500H45" stroke="#26566f" />
          </svg>
          <svg v-if="it.link" class="arrow" width="13" height="13" viewBox="0 0 13 13"><rect x="0.500" y="0.500" width="12" height="12" fill="#f4f6f9" stroke="#9ca6b5" /><path d="M3 11C2 7 4 5 6 5V2H11V7L9 6C7 7 7 9 7 11z" fill="#2c5ea8" /></svg>
        </span>
        <span class="label">{{ it.text }}</span>
      </button>
    </section>

    <section class="window">
      <header class="title"><svg width="16" height="16"><use href="#root" /></svg><h1>Диспетчер устройств</h1></header>
      <nav class="menu"><button v-for="m in menu" :key="m">{{ m }}</button></nav>
      <div class="tools">
        <button aria-label="Назад"><svg width="16" height="16" viewBox="0 0 16 16"><path d="M1 8L8 1.500V5.500H15.500V11H8V14.500z" fill="#9a9a9a" stroke="#666" /></svg></button>
        <button class="fwd" aria-label="Вперед"><svg width="16" height="16" viewBox="0 0 16 16"><path d="M15 8L8 1.500V5.500H0.500V11H8V14.500z" fill="#9a9a9a" stroke="#666" /></svg></button>
        <i></i>
        <button aria-label="Дерево консоли"><svg width="16" height="16" viewBox="0 0 16 16"><path d="M0.500 2.500H15.500V14.500H0.500z" fill="#fff" stroke="#8a939b" /><path d="M1 4H15M1 6.500H15" stroke="#7f97a8" /><path d="M7.500 7V14" stroke="#8a939b" /><path d="M2 9H6M2 11H6M2 13H6" stroke="#3a79bd" /><path d="M12 8V13L9 10.500z" fill="#4aa02c" /></svg></button>
        <i></i>
        <button aria-label="Справка"><svg width="14" height="16" viewBox="0 0 14 16"><rect width="14" height="16" fill="#3a55b5" /><rect width="3" height="16" fill="#253a86" /><text x="8" y="13" class="help" text-anchor="middle">?</text></svg></button>
        <button class="act" aria-label="Область действий"><svg width="16" height="16" viewBox="0 0 16 16"><path d="M0.500 2.500H15.500V14.500H0.500z" fill="#fff" stroke="#8a939b" /><path d="M1 4H15M1 6.500H15" stroke="#7f97a8" /><path d="M9.500 7V14" stroke="#8a939b" /><path d="M11 9H14M11 11H14M11 13H14" stroke="#3a79bd" /><path d="M4 8V13L7 10.500z" fill="#4aa02c" /></svg></button>
        <i></i>
        <button aria-label="Обновить конфигурацию"><svg width="17" height="16" viewBox="0 0 17 16"><rect x="0.500" y="1.500" width="16" height="10" fill="#48adef" stroke="#3a84b4" /><path d="M1 2H13L6 11H1z" fill="#8bd0f8" /><path d="M1 14.500H16" stroke="#8aa" /><circle cx="11" cy="6" r="4" fill="#d6effc" fill-opacity="0.7" stroke="#71a5c2" /><path d="M8 9L3 14" stroke="#53656f" stroke-width="1.600" /></svg></button>
      </div>
      <ul class="tree" role="tree">
        <li v-for="(n, i) in tree" :key="i" :class="'l' + n.l" role="treeitem" :aria-selected="!!n.sel">
          <button v-if="!n.leaf" class="tw" :class="{ open: n.open }" :aria-label="n.text">
            <svg width="10" height="10" viewBox="0 0 10 10"><path v-if="n.open" d="M1 3L5 7 9 3" /><path v-else d="M3 1L7 5 3 9" /></svg>
          </button>
          <span class="node" :class="{ sel: n.sel }"><svg width="16" height="16"><use :href="'#' + n.icon" /></svg><span>{{ n.text }}</span></span>
        </li>
      </ul>
      <footer class="status"></footer>
    </section>

    <footer class="bar">
      <button class="sys" aria-label="Пуск"><svg width="20" height="20" viewBox="0 0 20 20" fill="#fff"><path d="M0 3L8.500 1.700V9.500H0zM9.500 1.500L20 0V9.500H9.500zM0 10.500H8.500V18.300L0 17zM9.500 10.500H20V20L9.500 18.500z" /></svg></button>
      <button class="sys" aria-label="Поиск"><svg width="18" height="18" viewBox="0 0 18 18" fill="none" stroke="#fff" stroke-width="1.400"><circle cx="11" cy="6.500" r="5.300" /><path d="M7.500 10.500L1 17" /></svg></button>
      <button class="sys" aria-label="Представление задач"><svg width="18" height="18" viewBox="0 0 18 18" fill="none" stroke="#fff" stroke-width="1.200"><path d="M1.500 5.500H11.500V12.500H1.500zM1.500 1V3H11.500V1M1.500 17V15H11.500V17M15.500 1V4M15.500 10V17" /><path d="M14 5H17V9H14z" fill="#fff" stroke="none" /></svg></button>
      <div class="search">
        <input type="text" value="Скажите «Слушай, Алиса»" aria-label="Поиск" />
        <button aria-label="Микрофон"><svg width="16" height="22" viewBox="0 0 16 22"><rect x="4" y="1" width="8" height="13" rx="4" fill="#111" /><path d="M2 10V11C2 18 14 18 14 11V10M8 16V21" fill="none" stroke="#111" stroke-width="1.500" /></svg></button>
      </div>
      <div class="apps">
        <button v-for="a in apps" :key="a.icon" :class="{ on: a.on }" :aria-label="a.name">
          <svg width="24" height="24" :viewBox="a.big ? '0 0 48 48' : '0 0 24 24'"><use :href="'#' + a.icon" :width="a.big ? 48 : 24" :height="a.big ? 48 : 24" /><text v-if="a.big" x="25" y="37" class="mu" text-anchor="middle">µ</text></svg>
        </button>
      </div>
      <div class="tray">
        <button class="t40" aria-label="Люди"><svg width="16" height="16" viewBox="0 0 16 16" fill="none" stroke="#fff" stroke-width="1.200"><circle cx="5.500" cy="8" r="2.500" /><path d="M1 15C1 9.500 10 9.500 10 15" /><circle cx="11" cy="3.500" r="2.500" /><path d="M9 7C12 5.500 15 7 15 10" /></svg></button>
        <button class="t40" aria-label="HP"><svg width="22" height="22" viewBox="0 0 48 48"><use href="#hp" width="48" height="48" /><text x="24" y="38" class="q" text-anchor="middle">?</text></svg></button>
        <button class="t18" aria-label="Скрытые значки"><svg width="8" height="4" viewBox="0 0 8 4"><path d="M4 0L8 4H0z" fill="#fff" /></svg></button>
        <button class="t32" aria-label="Батарея"><svg width="16" height="12" viewBox="0 0 16 12" fill="none" stroke="#fff"><path d="M6 2.500H13.500V10.500H5.500V7M15 5V8M1.500 0V2M3.500 0V2M0.500 2.500H4.500V4.500L3.500 6H1.500L0.500 4.500zM2.500 6V9H5" /><path d="M8 4H12V9H8z" fill="#fff" stroke="none" /></svg></button>
        <button class="t20" aria-label="Сеть"><svg width="14" height="14" viewBox="0 0 14 14" fill="none" stroke="#fff" stroke-width="1.100"><path d="M1 13C1 6 6 1 13 1M4 13C4 8 8 4 13 4M7 13C7 10 10 7 13 7M10 13C10 11.500 11.500 10 13 10" /><circle cx="12.300" cy="12.300" r="1.300" fill="#fff" stroke="none" /></svg></button>
        <button class="t24" aria-label="Громкость"><svg width="17" height="14" viewBox="0 0 17 14" fill="none" stroke="#fff"><path d="M0.500 4.500H3L7 1V13L3 9.500H0.500zM9 4.500Q10.500 7 9 9.500M11 3Q14 7 11 11M13.500 1Q17.500 7 13.500 13" /></svg></button>
        <button class="t24" aria-label="Облако"><svg width="16" height="12" viewBox="0 0 16 12"><path d="M4 12C-1 12-1 6 3 5 4-1 12-1 13 5 17 6 17 12 13 12z" fill="#fff" /><path d="M8 4L11 7H9V10H7V7H5z" fill="#08264c" /></svg></button>
        <button class="t34">ENG</button>
        <button class="clock"><span>2:44</span><span>10.11.2018</span></button>
        <button class="t36" aria-label="Уведомления"><svg width="17" height="17" viewBox="0 0 17 17" fill="none" stroke="#fff" stroke-width="1.200"><path d="M1 1H16V13H10.500V16L7.500 13H1z" /></svg></button>
      </div>
    </footer>
  </main>
</template>

<style>
body { margin: 0; background: #00030f; }
</style>

<style scoped>
.screen { position: relative; height: 100vh; overflow: hidden; display: flex; flex-direction: column; font: 12px/15px Roboto, "Noto Sans", sans-serif; }
.wall { position: absolute; inset: 0; width: 100%; height: 100%; }
.defs { position: absolute; width: 0; height: 0; }
button { border: 0; padding: 0; margin: 0; background: none; color: inherit; font: inherit; }
svg { display: block; flex: none; }

.desktop { position: relative; flex: 1; min-height: 0; display: grid; grid-template-columns: repeat(auto-fill, 75px); grid-auto-rows: 99px; }
.tile { display: flex; flex-direction: column; align-items: center; justify-content: flex-start; gap: 3px; padding-top: 8px; color: #fff; }
.pic { position: relative; width: 48px; height: 48px; margin-right: 2px; }
.pic svg, .apps svg, .tray svg { overflow: visible; }
.pic .shot { margin: 19px 0 0 1px; overflow: hidden; }
.arrow { position: absolute; left: 0; top: 34px; }
.label { white-space: pre; text-align: center; text-shadow: 1px 1px 1px #000, 0 1px 3px #000; }

.free { font: bold 7px Roboto, sans-serif; fill: #fff; }
.mu { font: bold 46px Roboto, sans-serif; fill: #fff; transform: rotate(-9deg); transform-origin: 24px 24px; }
.q { font: bold 40px "Open Sans", sans-serif; fill: #fff; }
.w { font: bold 14px "Open Sans", sans-serif; fill: #fff; }
.help { font: bold 14px "Liberation Serif", serif; fill: #fff; }

.window { position: absolute; left: 772px; right: 0; top: 26px; display: flex; flex-direction: column; background: #fff; color: #000; border-left: 1px solid #1065a8; border-bottom: 1px solid #2a86b8; box-shadow: 0 4px 14px rgba(0, 0, 0, 0.55); }
.title { display: flex; align-items: center; gap: 5px; height: 31px; padding-left: 8px; background: #0063b1; color: #fff; }
.title h1 { margin: 0; font: inherit; }
.menu { display: flex; align-items: center; gap: 14px; height: 22px; padding-left: 10px; border-bottom: 1px solid #c8c8c8; }
.tools { display: flex; align-items: center; height: 23px; padding-left: 5px; border-bottom: 1px solid #d0d0d0; }
.tools .fwd { margin-left: 7px; }
.tools .act { margin-left: 9px; }
.tools i { width: 1px; height: 18px; margin: 0 8px 0 6px; background: #8c8c8c; }
.tree { list-style: none; margin: 6px 0 0 1px; padding: 0 0 12px; border-top: 1px solid #737880; border-left: 1px solid #828790; outline: 6px solid #f0f0f0; clip-path: inset(-6px 0 0 0); }
.tree li { display: flex; align-items: center; height: 18px; }
.l0 { padding-left: 3px; }
.l1 { padding-left: 22px; }
.l2 { padding-left: 58px; }
.tw { display: grid; place-items: center; width: 16px; height: 18px; margin-right: 1px; }
.tw path { fill: none; stroke: #a0a0a0; stroke-width: 1.5; }
.tw.open path { stroke: #404040; stroke-width: 1.8; }
.node { display: flex; align-items: center; gap: 5px; height: 18px; padding: 0 3px 0 2px; white-space: nowrap; }
.sel { background: #cce8ff; }
.status { height: 23px; background: #f0f0f0; border-top: 1px solid #d7d7d7; display: flex; justify-content: flex-end; }
.status::after { content: ""; width: 34px; border-left: 1px solid #d0d0d0; }

.bar { position: relative; display: flex; align-items: stretch; height: 40px; background: rgba(12, 30, 42, 0.5); color: #fff; }
.sys { display: grid; place-items: center; width: 48px; }
.search { display: flex; align-items: center; width: 342px; background: #cacaca; }
.search input { flex: 1; min-width: 0; border: 0; padding: 0 0 0 14px; background: none; color: #111; font: 15px/20px "Open Sans", "Noto Sans", sans-serif; outline: 0; }
.search button { display: grid; place-items: center; width: 46px; height: 40px; }
.apps { display: flex; gap: 3px; padding: 1px 0 1px 10px; }
.apps button { display: grid; place-items: center; width: 46px; box-sizing: border-box; border: 1px solid rgba(255, 255, 255, 0.35); background: rgba(255, 255, 255, 0.18); }
.apps .on { border-color: rgba(255, 255, 255, 0.85); background: rgba(255, 255, 255, 0.42); }
.tray { display: flex; margin-left: auto; padding-right: 21px; }
.tray button { display: grid; place-items: center; }
.t18 { width: 18px; }
.t20 { width: 20px; }
.t24 { width: 24px; }
.t32 { width: 32px; }
.t34 { width: 34px; }
.t36 { width: 36px; }
.t40 { width: 40px; }
.tray .clock { display: flex; flex-direction: column; align-items: center; justify-content: center; gap: 3px; width: 70px; }
</style>
